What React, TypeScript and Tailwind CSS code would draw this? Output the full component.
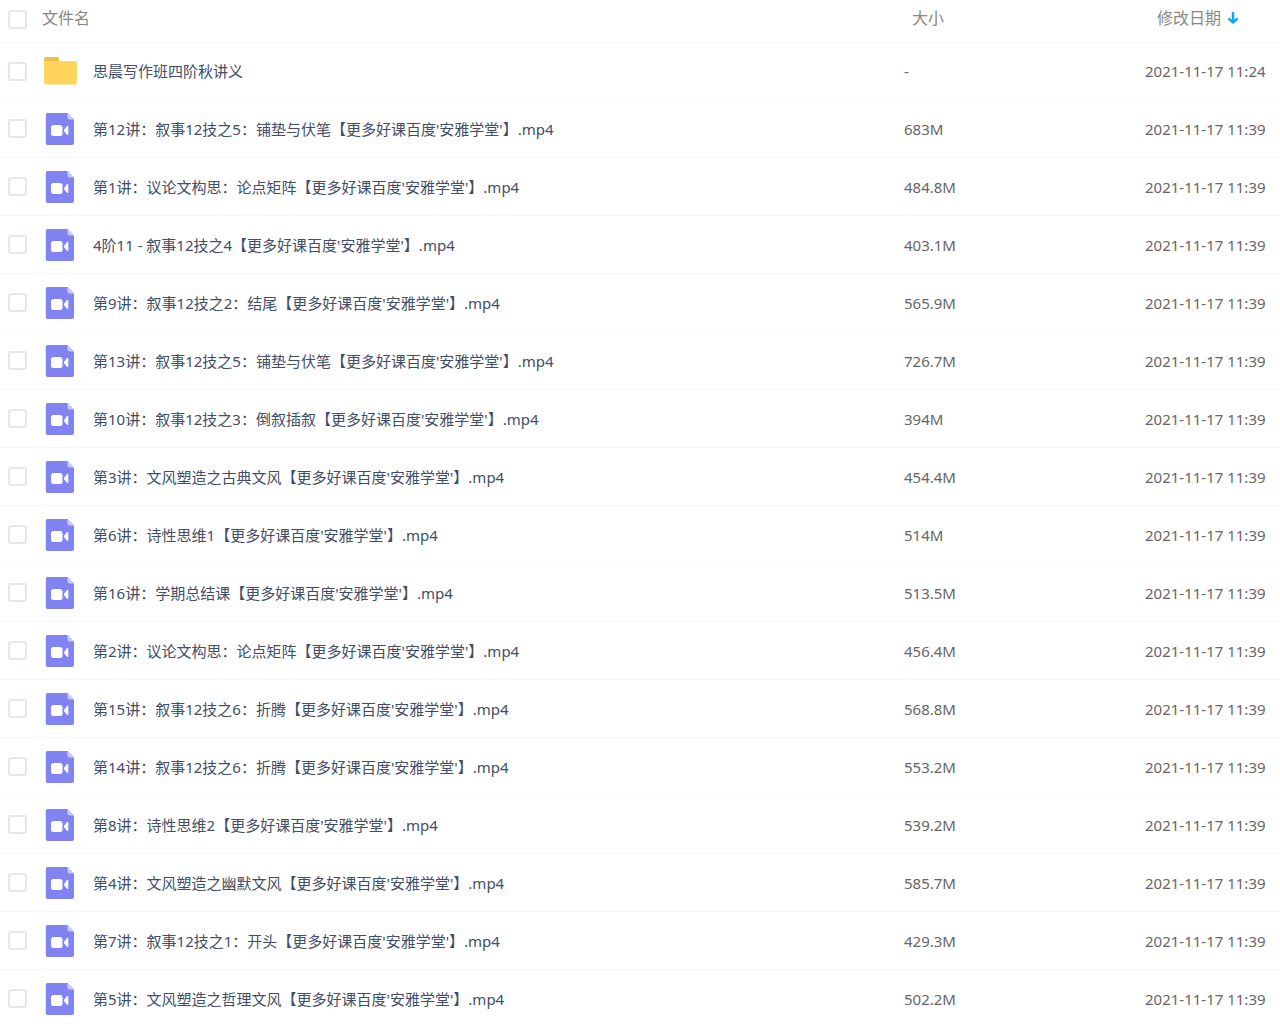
type FileEntry = {
  name: string;
  size: string;
  date: string;
  folder?: boolean;
};

const files: FileEntry[] = [
  { name: "思晨写作班四阶秋讲义", size: "-", date: "2021-11-17 11:24", folder: true },
  { name: "第12讲：叙事12技之5：铺垫与伏笔【更多好课百度'安雅学堂'】.mp4", size: "683M", date: "2021-11-17 11:39" },
  { name: "第1讲：议论文构思：论点矩阵【更多好课百度'安雅学堂'】.mp4", size: "484.8M", date: "2021-11-17 11:39" },
  { name: "4阶11 - 叙事12技之4【更多好课百度'安雅学堂'】.mp4", size: "403.1M", date: "2021-11-17 11:39" },
  { name: "第9讲：叙事12技之2：结尾【更多好课百度'安雅学堂'】.mp4", size: "565.9M", date: "2021-11-17 11:39" },
  { name: "第13讲：叙事12技之5：铺垫与伏笔【更多好课百度'安雅学堂'】.mp4", size: "726.7M", date: "2021-11-17 11:39" },
  { name: "第10讲：叙事12技之3：倒叙插叙【更多好课百度'安雅学堂'】.mp4", size: "394M", date: "2021-11-17 11:39" },
  { name: "第3讲：文风塑造之古典文风【更多好课百度'安雅学堂'】.mp4", size: "454.4M", date: "2021-11-17 11:39" },
  { name: "第6讲：诗性思维1【更多好课百度'安雅学堂'】.mp4", size: "514M", date: "2021-11-17 11:39" },
  { name: "第16讲：学期总结课【更多好课百度'安雅学堂'】.mp4", size: "513.5M", date: "2021-11-17 11:39" },
  { name: "第2讲：议论文构思：论点矩阵【更多好课百度'安雅学堂'】.mp4", size: "456.4M", date: "2021-11-17 11:39" },
  { name: "第15讲：叙事12技之6：折腾【更多好课百度'安雅学堂'】.mp4", size: "568.8M", date: "2021-11-17 11:39" },
  { name: "第14讲：叙事12技之6：折腾【更多好课百度'安雅学堂'】.mp4", size: "553.2M", date: "2021-11-17 11:39" },
  { name: "第8讲：诗性思维2【更多好课百度'安雅学堂'】.mp4", size: "539.2M", date: "2021-11-17 11:39" },
  { name: "第4讲：文风塑造之幽默文风【更多好课百度'安雅学堂'】.mp4", size: "585.7M", date: "2021-11-17 11:39" },
  { name: "第7讲：叙事12技之1：开头【更多好课百度'安雅学堂'】.mp4", size: "429.3M", date: "2021-11-17 11:39" },
  { name: "第5讲：文风塑造之哲理文风【更多好课百度'安雅学堂'】.mp4", size: "502.2M", date: "2021-11-17 11:39" },
];

function Checkbox({ label }: { label: string }) {
  return (
    <input
      type="checkbox"
      aria-label={label}
      className="block size-[19px] appearance-none rounded-[3px] border-2 border-[#e3e8ee] bg-white checked:border-[#06a7ff] checked:bg-[#06a7ff]"
    />
  );
}

function FolderIcon() {
  return (
    <svg className="h-8 w-[34px] shrink-0" viewBox="0 0 34 32" aria-hidden="true">
      <path d="M1 4A2 2 0 0 1 3 2H14.500A1.500 1.500 0 0 1 16 3.500V10H1Z" fill="#ecbf4a" />
      <path d="M1 6H32.500A1.800 1.800 0 0 1 34 7.800V27.500A2 2 0 0 1 32.200 29.500H3A2 2 0 0 1 1 27.500Z" fill="#ffd45c" />
    </svg>
  );
}

function VideoIcon() {
  return (
    <svg className="h-8 w-[34px] shrink-0" viewBox="0 0 34 32" aria-hidden="true">
      <path d="M4.500 0H24.500L31 6.500V30A2 2 0 0 1 29 32H4.500A1.700 1.700 0 0 1 2.800 30.300V1.700A1.700 1.700 0 0 1 4.500 0Z" fill="#8183f1" />
      <path d="M24.500 0L31 6.500H26.500A2 2 0 0 1 24.500 4.500Z" fill="#c9caf9" />
      <rect x="8" y="12" width="11.500" height="11" rx="2.500" fill="#fff" />
      <path d="M21.300 16.600L24 13.200Q25.300 12.300 25.300 13.700V21.300Q25.300 22.700 24 21.800L21.300 18.400Q20.600 17.500 21.300 16.600Z" fill="#fff" />
    </svg>
  );
}

function SortArrow() {
  return (
    <svg className="h-[14px] w-3" viewBox="0 0 12 14" fill="none" stroke="#06a7ff" strokeWidth="2.400" aria-hidden="true">
      <path d="M6 1V12M1.500 7.500L6 11.500L10.500 7.500" />
    </svg>
  );
}

export default function App() {
  return (
    <main className="h-screen overflow-hidden bg-white font-['Noto_Sans','Noto_Sans_CJK_SC',sans-serif] text-[15px] leading-6 text-[#666]">
      <table className="w-full table-fixed border-separate border-spacing-0">
        <colgroup>
          <col className="w-[42px]" />
          <col />
          <col className="w-[241px]" />
          <col className="w-[135px]" />
        </colgroup>
        <thead>
          <tr className="h-[43px] text-left text-base text-[#888] [&>th]:border-b [&>th]:border-[#f5f6fd] [&>th]:p-0 [&>th]:font-normal">
            <th className="pb-1! pl-2!">
              <Checkbox label="全选" />
            </th>
            <th className="pb-1.5!">文件名</th>
            <th className="pb-1.5! pl-2!">大小</th>
            <th className="pb-1.5! pl-3!">
              <button type="button" className="flex items-center gap-1.5">
                修改日期
                <SortArrow />
              </button>
            </th>
          </tr>
        </thead>
        <tbody>
          {files.map((file) => (
            <tr
              key={file.name}
              className={`${file.folder ? "h-[57px]" : "h-[58px]"} [&>td]:border-b [&>td]:border-[#f5f6fd] [&>td]:p-0`}
            >
              <td className="pl-2!">
                <Checkbox label={file.name} />
              </td>
              <td>
                <a href="#" className="flex items-center gap-4 pl-px whitespace-nowrap text-[#424e67]">
                  {file.folder ? <FolderIcon /> : <VideoIcon />}
                  {file.name}
                </a>
              </td>
              <td>{file.size}</td>
              <td className="whitespace-nowrap">{file.date}</td>
            </tr>
          ))}
        </tbody>
      </table>
    </main>
  );
}
